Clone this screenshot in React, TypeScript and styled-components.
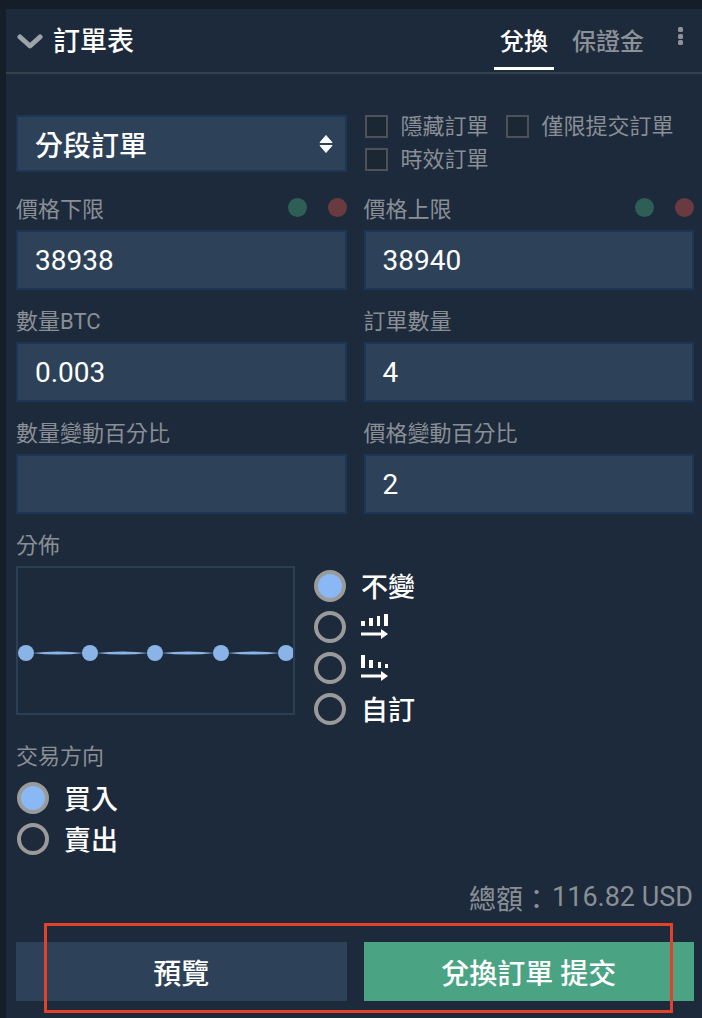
import React from "react";
import styled, { createGlobalStyle } from "styled-components";

const Global = createGlobalStyle`
  html, body { margin: 0; padding: 0; background: #151e28; }
  body { font-family: Roboto, "Noto Sans CJK TC", sans-serif; }
  * { box-sizing: border-box; }
`;

const Page = styled.div`
  width: 702px;
  height: 1018px;
  padding: 9px 0 0 6px;
  overflow: hidden;
`;

const Panel = styled.div`
  background: #1d2a3b;
  height: 1009px;
`;

const Header = styled.div`
  height: 65px;
  border-bottom: 2px solid #36414e;
  display: flex;
  align-items: stretch;
  padding-left: 11px;
`;

const TitleWrap = styled.div`
  display: flex;
  align-items: center;
  gap: 10px;
  padding-top: 3px;
`;

const Title = styled.div`
  color: #ffffff;
  font-size: 27px;
  font-weight: 500;
  line-height: 1;
`;

const Tabs = styled.div`
  margin-left: auto;
  display: flex;
  align-items: stretch;
  gap: 12px;
`;

const Tab = styled.div<{ $active?: boolean }>`
  display: flex;
  align-items: center;
  justify-content: center;
  padding: 2px 6px 0;
  font-size: 24px;
  font-weight: 500;
  color: ${(p) => (p.$active ? "#ffffff" : "#8c9198")};
  border-bottom: 3px solid ${(p) => (p.$active ? "#ffffff" : "transparent")};
  margin-bottom: 2px;
`;

const Kebab = styled.div`
  display: flex;
  flex-direction: column;
  gap: 1.5px;
  margin: 18px 19px 0 28px;
`;

const KebabDot = styled.span`
  width: 5px;
  height: 5px;
  border-radius: 1.5px;
  background: #8d939b;
`;

const Body = styled.div`
  padding: 41px 8px 0 10px;
`;

const TwoCol = styled.div`
  display: grid;
  grid-template-columns: 1fr 1fr;
  column-gap: 17px;
`;

const TopRow = styled(TwoCol)`
  margin-bottom: 6px;
`;

const Select = styled.div`
  height: 57px;
  background: #2d4158;
  border: 2px solid #1e3555;
  display: flex;
  align-items: center;
  justify-content: space-between;
  padding: 0 12px 0 17px;
  color: #ffffff;
  font-size: 28px;
  font-weight: 500;
`;

const Checks = styled.div`
  display: flex;
  flex-wrap: wrap;
  column-gap: 17px;
  row-gap: 9px;
  margin-left: 1px;
  margin-top: -1px;
`;

const CheckItem = styled.label`
  display: flex;
  align-items: center;
  gap: 13px;
  color: #8a8f96;
  font-size: 22px;
  line-height: 23px;
`;

const CheckBox = styled.span`
  width: 23px;
  height: 23px;
  border: 2px solid #4e5258;
  background: #1c2734;
`;

const LabelRow = styled.div<{ $shift?: number }>`
  height: 52px;
  padding-top: 6px;
  margin-top: ${(p) => p.$shift ?? 0}px;
  display: flex;
  align-items: center;
  justify-content: space-between;
  color: #8a8f96;
  font-size: 22px;
`;

const Dots = styled.div`
  display: flex;
  gap: 21px;
`;

const Dot = styled.span<{ $color: string }>`
  width: 19px;
  height: 19px;
  border-radius: 50%;
  background: ${(p) => p.$color};
`;

const Input = styled.div`
  height: 60px;
  background: #2d4158;
  border: 2px solid #1d3656;
  padding-left: 17px;
  display: flex;
  align-items: center;
  color: #ffffff;
  font-size: 28px;
  font-weight: 400;
`;

const DistRow = styled.div`
  display: grid;
  grid-template-columns: 279px 1fr;
  column-gap: 19px;
  align-items: start;
`;

const ChartBox = styled.div`
  height: 149px;
  border: 2px solid #2d3f55;
  display: flex;
`;

const RadioList = styled.div`
  display: flex;
  flex-direction: column;
`;

const DistRadios = styled(RadioList)`
  margin-top: -1px;
`;

const RadioItem = styled.div<{ $offset?: number }>`
  height: 41px;
  display: flex;
  align-items: center;
  gap: 15px;
  color: #ffffff;
  font-size: 27px;
  font-weight: 500;
  padding-left: ${(p) => p.$offset ?? 0}px;
`;

const Radio = styled.span<{ $on?: boolean }>`
  width: 32px;
  height: 32px;
  border-radius: 50%;
  border: 4px solid #9a9a9a;
  background: ${(p) => (p.$on ? "#8ab8f5" : "transparent")};
  flex-shrink: 0;
`;

const TotalRow = styled.div`
  margin-top: 21px;
  height: 34px;
  display: flex;
  align-items: center;
  justify-content: flex-end;
  gap: 2px;
  padding-right: 1px;
  color: #8a8f96;
  font-size: 27px;
`;

const ButtonRow = styled(TwoCol)`
  margin-top: 28px;
  position: relative;
`;

const Button = styled.div<{ $primary?: boolean }>`
  height: 59px;
  display: flex;
  align-items: center;
  justify-content: center;
  background: ${(p) => (p.$primary ? "#4aa383" : "#2d4158")};
  color: #ffffff;
  font-size: 28px;
  font-weight: 500;
`;

const Highlight = styled.div`
  position: absolute;
  top: -19px;
  left: 28px;
  width: 629px;
  height: 90px;
  border: 3.5px solid #e4412b;
  pointer-events: none;
`;

const Chevron = () => (
  <svg width="26" height="16" viewBox="0 0 26 16">
    <polyline points="3,3 13,12 23,3" fill="none" stroke="#9ea3a9" strokeWidth="5" strokeLinecap="round" strokeLinejoin="round" />
  </svg>
);

const UpDown = () => (
  <svg width="14" height="20" viewBox="0 0 14 20">
    <path d="M1 8.5 L7 1.5 L13 8.5 Z" fill="#ffffff" stroke="#ffffff" strokeWidth="1" strokeLinejoin="round" />
    <path d="M1 11.5 L7 18.5 L13 11.5 Z" fill="#ffffff" stroke="#ffffff" strokeWidth="1" strokeLinejoin="round" />
  </svg>
);

const AscIcon = () => (
  <svg width="28" height="27" viewBox="0 0 28 27">
    <rect x="0" y="8" width="4" height="5" fill="#fff" />
    <rect x="8" y="5" width="4" height="8" fill="#fff" />
    <rect x="16" y="3" width="3" height="10" fill="#fff" />
    <rect x="23" y="1" width="4" height="12" fill="#fff" />
    <rect x="0" y="19.5" width="22" height="3" fill="#fff" />
    <polygon points="20,16 27,21 20,26" fill="#fff" />
  </svg>
);

const DescIcon = () => (
  <svg width="28" height="27" viewBox="0 0 28 27">
    <rect x="0" y="1" width="4" height="13" fill="#fff" />
    <rect x="8" y="6" width="4" height="8" fill="#fff" />
    <rect x="17" y="8" width="3" height="6" fill="#fff" />
    <rect x="24" y="10" width="3" height="4" fill="#fff" />
    <rect x="0" y="20.5" width="22" height="3" fill="#fff" />
    <polygon points="20,17 27,22 20,27" fill="#fff" />
  </svg>
);

const ChartSvg = () => {
  const xs = [8, 72, 137, 203, 268];
  const y = 85;
  return (
    <svg width="275" height="145" viewBox="0 0 275 145">
      {xs.slice(0, -1).map((x, i) => {
        const a = x + 6;
        const b = xs[i + 1] - 6;
        const m = (a + b) / 2;
        return <path key={i} d={`M${a} ${y} Q${m} ${y - 3.2} ${b} ${y} Q${m} ${y + 3.2} ${a} ${y} Z`} fill="#8ab4e8" />;
      })}
      {xs.map((x) => (
        <circle key={x} cx={x} cy={y} r="8" fill="#8ab4e8" />
      ))}
    </svg>
  );
};

export default function App() {
  return (
    <>
      <Global />
      <Page>
        <Panel>
          <Header>
            <TitleWrap>
              <Chevron />
              <Title>訂單表</Title>
            </TitleWrap>
            <Tabs>
              <Tab $active>兌換</Tab>
              <Tab>保證金</Tab>
            </Tabs>
            <Kebab>
              <KebabDot />
              <KebabDot />
              <KebabDot />
            </Kebab>
          </Header>
          <Body>
            <TopRow>
              <Select>
                <span>分段訂單</span>
                <UpDown />
              </Select>
              <Checks>
                <CheckItem>
                  <CheckBox />
                  隱藏訂單
                </CheckItem>
                <CheckItem>
                  <CheckBox />
                  僅限提交訂單
                </CheckItem>
                <CheckItem>
                  <CheckBox />
                  時效訂單
                </CheckItem>
              </Checks>
            </TopRow>

            <TwoCol>
              <div>
                <LabelRow>
                  <span>價格下限</span>
                  <Dots>
                    <Dot $color="#2e5f57" />
                    <Dot $color="#6a3a41" />
                  </Dots>
                </LabelRow>
                <Input>38938</Input>
              </div>
              <div>
                <LabelRow>
                  <span>價格上限</span>
                  <Dots>
                    <Dot $color="#2e5f57" />
                    <Dot $color="#6a3a41" />
                  </Dots>
                </LabelRow>
                <Input>38940</Input>
              </div>
              <div>
                <LabelRow>
                  <span>數量BTC</span>
                </LabelRow>
                <Input>0.003</Input>
              </div>
              <div>
                <LabelRow>
                  <span>訂單數量</span>
                </LabelRow>
                <Input>4</Input>
              </div>
              <div>
                <LabelRow>
                  <span>數量變動百分比</span>
                </LabelRow>
                <Input />
              </div>
              <div>
                <LabelRow>
                  <span>價格變動百分比</span>
                </LabelRow>
                <Input>2</Input>
              </div>
            </TwoCol>

            <LabelRow>
              <span>分佈</span>
            </LabelRow>
            <DistRow>
              <ChartBox>
                <ChartSvg />
              </ChartBox>
              <DistRadios>
                <RadioItem>
                  <Radio $on />
                  不變
                </RadioItem>
                <RadioItem>
                  <Radio />
                  <AscIcon />
                </RadioItem>
                <RadioItem>
                  <Radio />
                  <DescIcon />
                </RadioItem>
                <RadioItem>
                  <Radio />
                  自訂
                </RadioItem>
              </DistRadios>
            </DistRow>

            <LabelRow $shift={-4}>
              <span>交易方向</span>
            </LabelRow>
            <RadioList>
              <RadioItem $offset={1}>
                <Radio $on />
                買入
              </RadioItem>
              <RadioItem $offset={1}>
                <Radio />
                賣出
              </RadioItem>
            </RadioList>

            <TotalRow>
              <span>總額：</span>
              <span>116.82 USD</span>
            </TotalRow>

            <ButtonRow>
              <Button>預覽</Button>
              <Button $primary>兌換訂單 提交</Button>
              <Highlight />
            </ButtonRow>
          </Body>
        </Panel>
      </Page>
    </>
  );
}
